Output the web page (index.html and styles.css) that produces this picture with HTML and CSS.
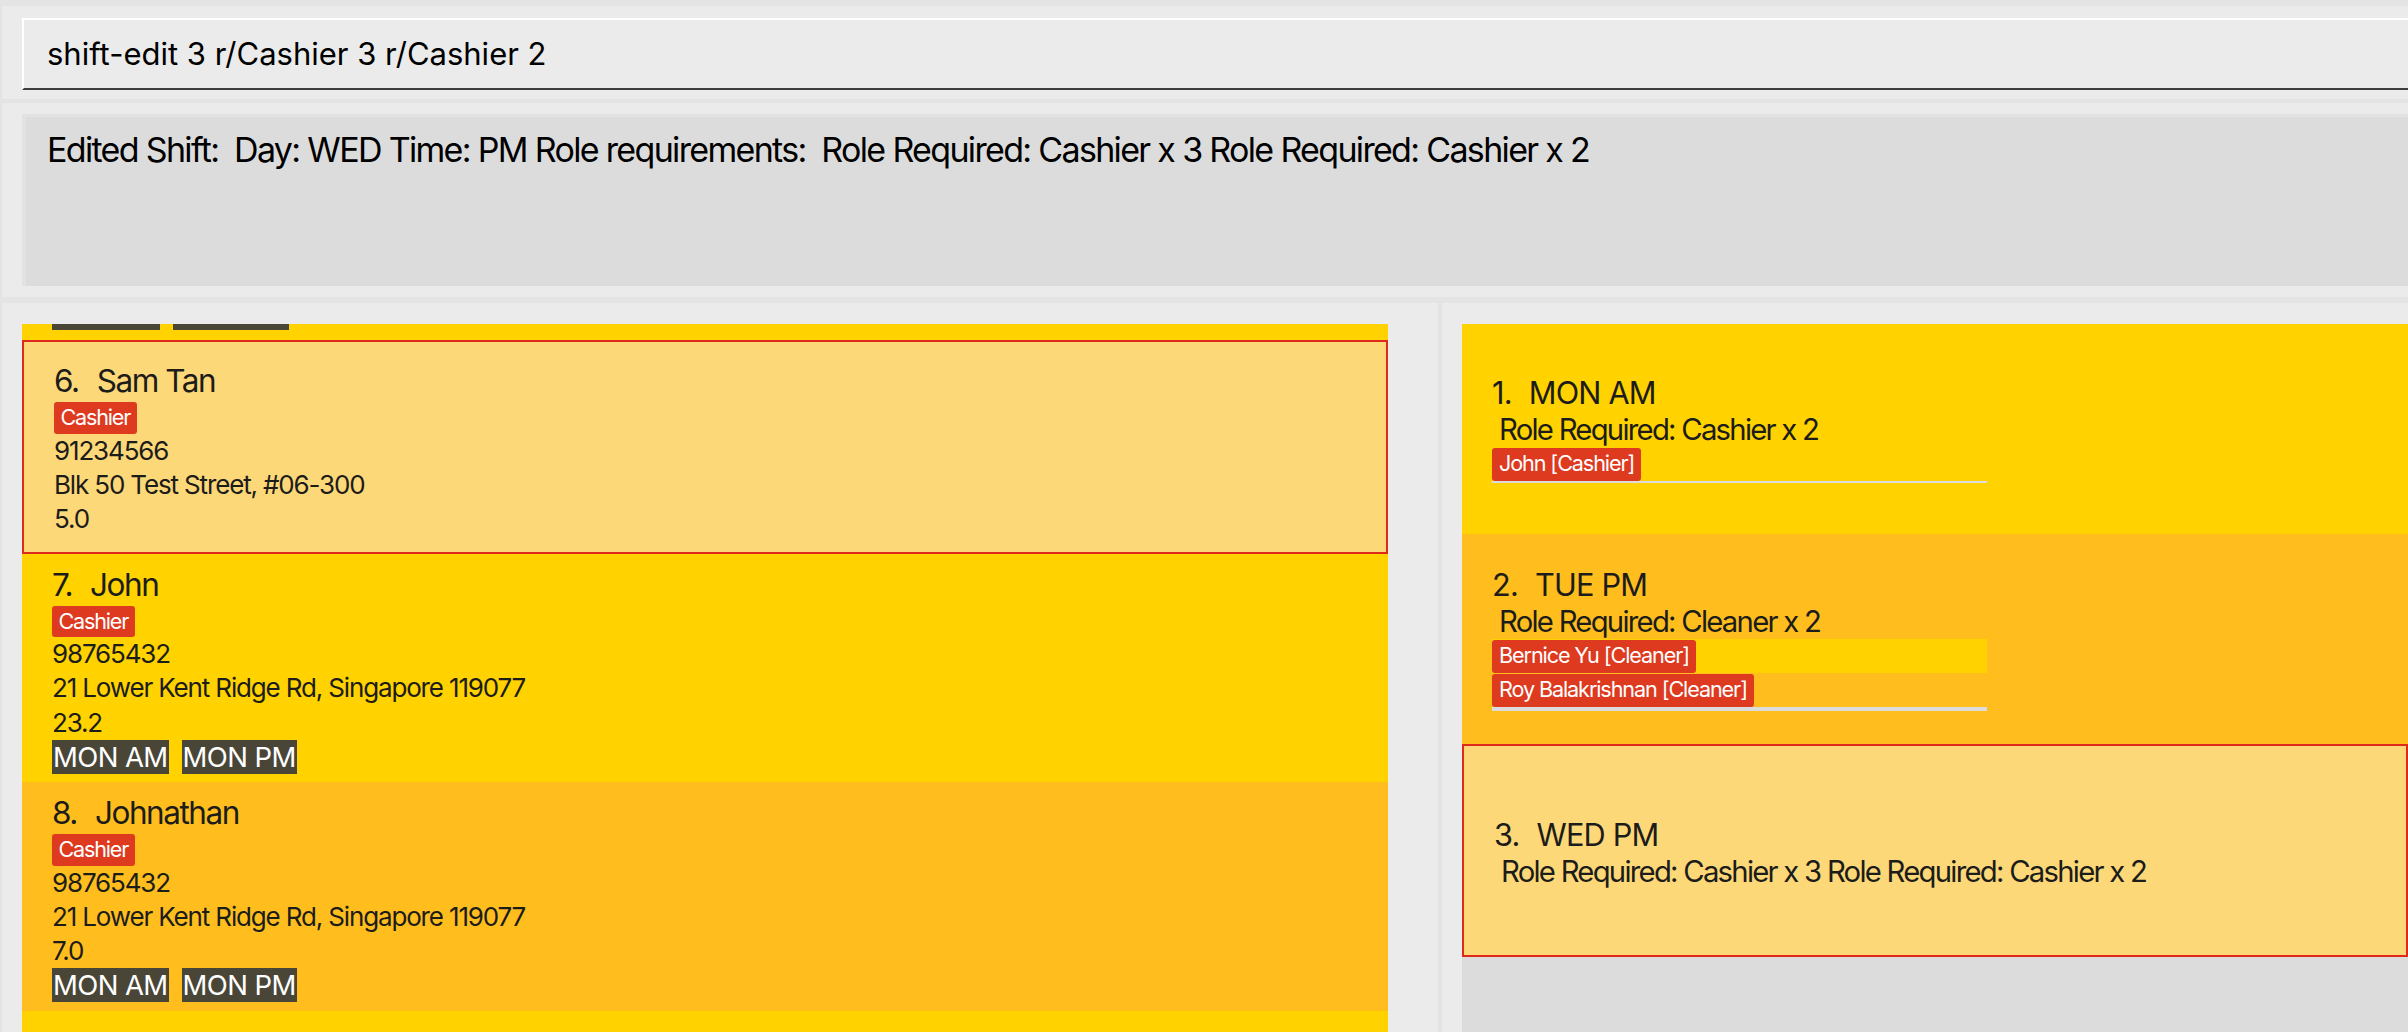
FILE: index.html
```html
<!DOCTYPE html>
<html lang="en">
<head>
<meta charset="utf-8">
<title>Shift Manager</title>
<link rel="stylesheet" href="styles.css">
</head>
<body>
<div class="app">
  <section class="command-pane">
    <div class="command-box">shift-edit 3 r/Cashier 3 r/Cashier 2</div>
  </section>
  <section class="result-pane">
    <div class="result-box"><div class="result-text">Edited Shift:  Day: WED Time: PM Role requirements:  Role Required: Cashier x 3 Role Required: Cashier x 2</div></div>
  </section>
  <section class="lists">
    <div class="person-pane">
      <div class="person-viewport">
        <div class="person-list">
          <div class="person-card-tail bg-yellow">
            <div class="shift-tags"><span class="shift-tag-stub stub-short"></span><span class="shift-tag-stub stub-long"></span></div>
          </div>
          <div class="person-card selected">
            <div class="person-head"><span class="idx">6.</span><span>Sam Tan</span></div>
            <div class="tags"><span class="role-tag">Cashier</span></div>
            <div class="detail">91234566</div>
            <div class="detail">Blk 50 Test Street, #06-300</div>
            <div class="detail">5.0</div>
          </div>
          <div class="person-card bg-yellow">
            <div class="person-head"><span class="idx">7.</span><span>John</span></div>
            <div class="tags"><span class="role-tag">Cashier</span></div>
            <div class="detail">98765432</div>
            <div class="detail">21 Lower Kent Ridge Rd, Singapore 119077</div>
            <div class="detail">23.2</div>
            <div class="shift-tags"><span class="shift-tag">MON AM</span><span class="shift-tag">MON PM</span></div>
          </div>
          <div class="person-card bg-amber">
            <div class="person-head"><span class="idx">8.</span><span>Johnathan</span></div>
            <div class="tags"><span class="role-tag">Cashier</span></div>
            <div class="detail">98765432</div>
            <div class="detail">21 Lower Kent Ridge Rd, Singapore 119077</div>
            <div class="detail">7.0</div>
            <div class="shift-tags"><span class="shift-tag">MON AM</span><span class="shift-tag">MON PM</span></div>
          </div>
          <div class="person-card bg-yellow">
            <div class="person-head"><span class="idx">9.</span><span>John Lim</span></div>
          </div>
        </div>
      </div>
    </div>
    <div class="divider"></div>
    <div class="shift-pane">
      <div class="shift-list">
        <div class="shift-card bg-yellow">
          <div class="shift-head"><span class="idx">1.</span><span>MON AM</span></div>
          <div class="role-line">Role Required: Cashier x 2</div>
          <div class="assigned-list">
            <div class="assigned-row row-yellow"><span class="person-tag">John [Cashier]</span></div>
          </div>
        </div>
        <div class="shift-card bg-amber">
          <div class="shift-head"><span class="idx">2.</span><span>TUE PM</span></div>
          <div class="role-line">Role Required: Cleaner x 2</div>
          <div class="assigned-list two">
            <div class="assigned-row row-yellow"><span class="person-tag">Bernice Yu [Cleaner]</span></div>
            <div class="assigned-row"><span class="person-tag">Roy Balakrishnan [Cleaner]</span></div>
          </div>
        </div>
        <div class="shift-card selected">
          <div class="shift-head"><span class="idx">3.</span><span>WED PM</span></div>
          <div class="role-line">Role Required: Cashier x 3 Role Required: Cashier x 2</div>
        </div>
      </div>
    </div>
  </section>
</div>
</body>
</html>
```

FILE: styles.css
```css
html, body {
  margin: 0;
  padding: 0;
}

body {
  width: 2408px;
  height: 1032px;
  overflow: hidden;
  background: #e4e4e4;
  font-family: "Inter", "Open Sans", sans-serif;
  color: #1c1c1a;
}

.app {
  display: flex;
  flex-direction: column;
  height: 1032px;
  padding-top: 6px;
  padding-left: 2px;
  box-sizing: border-box;
}

/* command box */
.command-pane {
  background: #ebebeb;
  padding: 12px 0 9px 20px;
}

.command-box {
  height: 68px;
  line-height: 68px;
  border-top: 2px solid #ffffff;
  border-left: 2px solid #ffffff;
  border-bottom: 2px solid #3d3d3d;
  padding-left: 23px;
  font-size: 31px;
  color: #000;
  white-space: pre;
}

/* result display */
.result-pane {
  margin-top: 4px;
  background: #ebebeb;
  padding: 11px 0 11px 20px;
}

.result-box {
  box-sizing: border-box;
  height: 172px;
  border-top: 3px solid #e2e2e2;
  border-left: 4px solid #e2e2e2;
  background: #dcdcdc;
  padding: 13px 0 0 21px;
}

.result-text {
  font-size: 34px;
  line-height: 40px;
  letter-spacing: -1.67px;
  white-space: pre;
  color: #000;
}

/* lists */
.lists {
  margin-top: 6px;
  flex: 1;
  min-height: 0;
  display: flex;
  background: #ebebeb;
}

.person-pane {
  width: 1436px;
  box-sizing: border-box;
  padding: 21px 50.5px 0 20px;
  display: flex;
  flex-direction: column;
}

.person-viewport {
  flex: 1;
  overflow: hidden;
}

.divider {
  width: 4px;
  background: #e3e3e3;
}

.shift-pane {
  flex: 1;
  padding: 21px 0 0 20px;
  display: flex;
  flex-direction: column;
}

.shift-list {
  flex: 1;
  background: #dcdcdc;
}

.bg-yellow { background: #ffd200; }
.bg-amber { background: #ffbe1e; }

/* tail of the card scrolled above the viewport */
.person-card-tail {
  padding: 0 0 10px 30px;
}

.shift-tag-stub {
  display: block;
  height: 6px;
  background: #4a4637;
}

.stub-short { width: 108px; }
.stub-long { width: 116px; }

/* person cards */
.person-card {
  min-height: 189.2px;
  padding: 12px 0 8.5px 30px;
  display: flex;
  flex-direction: column;
  justify-content: center;
}

.person-card.selected {
  background: #fdd878;
  border: 2px solid #dd2a1b;
  padding-top: 12.5px;
  padding-bottom: 8px;
}

.person-head {
  display: flex;
  align-items: baseline;
  font-size: 31.5px;
  line-height: 38px;
  letter-spacing: -1.45px;
  white-space: nowrap;
}

.person-head .idx {
  margin-right: 18px;
}

.tags {
  display: flex;
  gap: 8px;
  margin-top: 2px;
}

.role-tag {
  background: #dd3a20;
  color: #ffffff;
  font-size: 21.6px;
  line-height: 31.5px;
  padding: 0 6.5px;
  border-radius: 3px;
  letter-spacing: -1.2px;
}

.detail {
  font-size: 26px;
  line-height: 34.2px;
  letter-spacing: -1.15px;
  white-space: nowrap;
}

.shift-tags {
  display: flex;
  gap: 13px;
}

.shift-tag {
  background: #4a4637;
  color: #ffffff;
  font-size: 27.5px;
  line-height: 34px;
  padding: 0 1px;
  letter-spacing: -0.6px;
}

/* shift cards */
.shift-card {
  min-height: 210px;
  padding-left: 30px;
  display: flex;
  flex-direction: column;
  justify-content: center;
}

.shift-card.selected {
  background: #fdd878;
  border: 2px solid #dd2a1b;
  min-height: 205px;
  padding-top: 4px;
}

.shift-head {
  display: flex;
  align-items: baseline;
  font-size: 30.7px;
  line-height: 36px;
  letter-spacing: -0.8px;
  white-space: nowrap;
}

.shift-head .idx {
  margin-right: 17px;
}

.role-line {
  font-size: 29.3px;
  line-height: 34px;
  margin-top: 2px;
  padding-left: 7px;
  letter-spacing: -1.75px;
  white-space: nowrap;
}

.assigned-list {
  width: 495px;
  border-bottom: 2px solid #dcdcdc;
}

.assigned-list.two {
  border-bottom-width: 4px;
}

.assigned-row {
  height: 34px;
  box-sizing: border-box;
  padding-top: 1px;
  display: flex;
}

.row-yellow { background: #ffd200; }

.person-tag {
  background: #dd3a20;
  color: #ffffff;
  font-size: 21.6px;
  line-height: 31px;
  padding: 0 7px;
  border-radius: 3px;
  letter-spacing: -1.1px;
}
```
